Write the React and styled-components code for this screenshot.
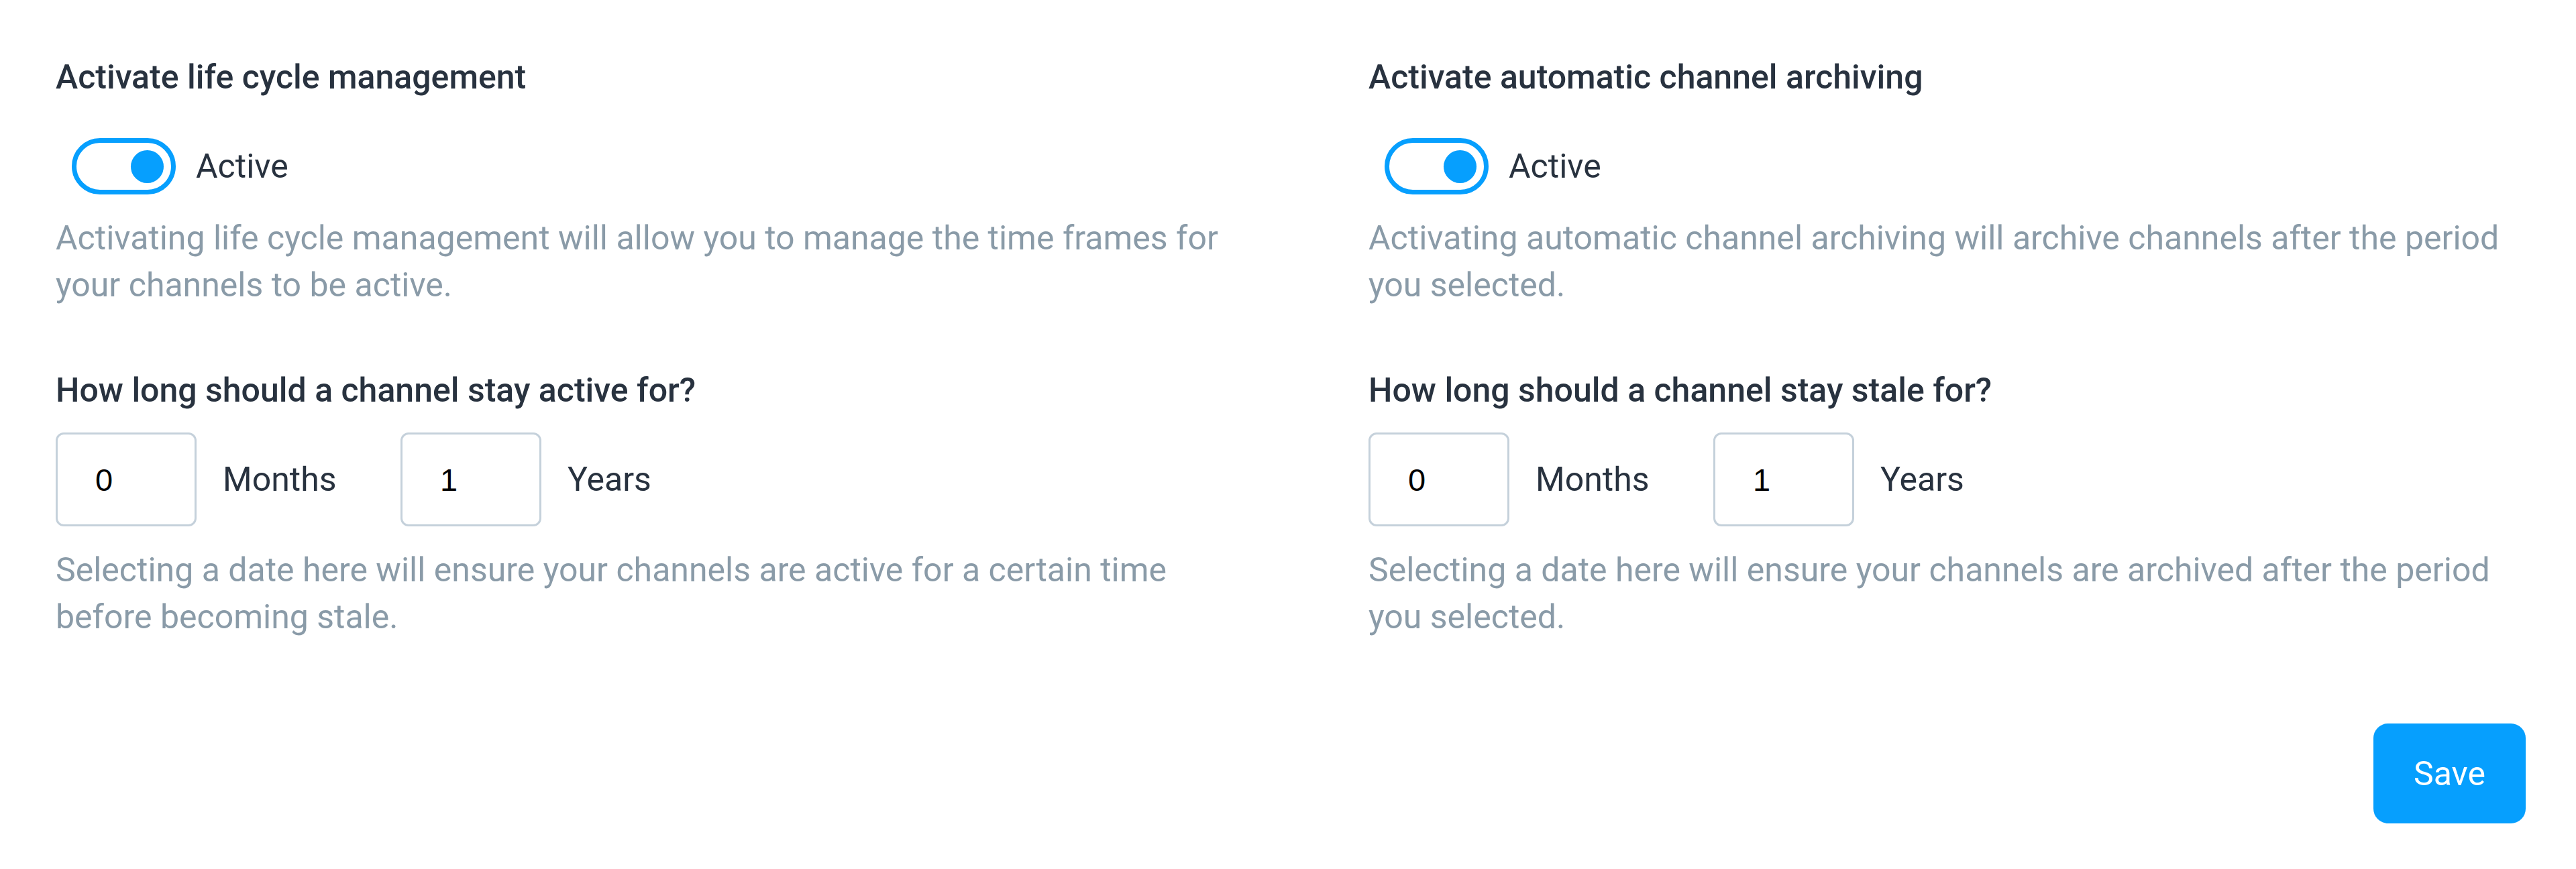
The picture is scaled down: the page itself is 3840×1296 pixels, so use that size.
import React, { useState } from 'react'
import styled, { createGlobalStyle } from 'styled-components'

const GlobalStyle = createGlobalStyle`
  body {
    margin: 0;
    background: #ffffff;
    font-family: Roboto, "Open Sans", Arial, sans-serif;
  }
`

const Page = styled.div`
  padding: 80px 75px 60px 83px;
`

const Columns = styled.div`
  display: grid;
  grid-template-columns: 1745px 1fr;
  column-gap: 212px;
`

const Section = styled.div`
  display: flex;
  flex-direction: column;
`

const Title = styled.div`
  font-size: 50px;
  line-height: 70px;
  font-weight: 500;
  color: #28323f;
  margin-top: ${(p) => (p.$first ? '0' : '87px')};
`

const ToggleRow = styled.div`
  display: flex;
  align-items: center;
  gap: 30px;
  margin-top: 56px;
  padding-left: 24px;
`

const Switch = styled.button`
  box-sizing: border-box;
  width: 155px;
  height: 84px;
  border: 7px solid #069ffe;
  border-radius: 42px;
  background: #ffffff;
  display: flex;
  align-items: center;
  justify-content: ${(p) => (p.$on ? 'flex-end' : 'flex-start')};
  padding: 0 11px;
  cursor: pointer;
`

const Knob = styled.span`
  width: 49px;
  height: 49px;
  border-radius: 50%;
  background: ${(p) => (p.$on ? '#069ffe' : '#c5d1db')};
`

const Label = styled.span`
  font-size: 50px;
  line-height: 70px;
  color: #28323f;
`

const Help = styled.p`
  margin: 30px 0 0;
  font-size: 50px;
  line-height: 70px;
  color: #8a9ba8;
`

const InputRow = styled.div`
  display: flex;
  align-items: center;
  gap: 40px;
  margin-top: 28px;
`

const Group = styled.div`
  display: flex;
  align-items: center;
  gap: 39px;
`

const NumberBox = styled.input`
  box-sizing: border-box;
  width: 210px;
  height: 140px;
  border: 3px solid #c5d1db;
  border-radius: 12px;
  padding: 0 0 0 56px;
  font-family: "Liberation Sans", Arial, sans-serif;
  font-size: 47px;
  color: #000000;
  outline: none;
`

const Unit = styled.span`
  min-width: 225px;
  font-size: 50px;
  line-height: 70px;
  color: #28323f;
`

const Footer = styled.div`
  display: flex;
  justify-content: flex-end;
  margin-top: 124px;
`

const SaveButton = styled.button`
  width: 227px;
  height: 149px;
  border: none;
  border-radius: 22px;
  background: #069ffe;
  color: #ffffff;
  font-family: Roboto, "Open Sans", Arial, sans-serif;
  font-size: 50px;
  cursor: pointer;
`

function Panel({ title, help, question, note }) {
  const [on, setOn] = useState(true)
  const [months, setMonths] = useState('0')
  const [years, setYears] = useState('1')
  return (
    <Section>
      <Title $first>{title}</Title>
      <ToggleRow>
        <Switch $on={on} onClick={() => setOn(!on)}>
          <Knob $on={on} />
        </Switch>
        <Label>{on ? 'Active' : 'Inactive'}</Label>
      </ToggleRow>
      <Help>{help}</Help>
      <Title>{question}</Title>
      <InputRow>
        <Group>
          <NumberBox value={months} onChange={(e) => setMonths(e.target.value)} />
          <Unit>Months</Unit>
        </Group>
        <Group>
          <NumberBox value={years} onChange={(e) => setYears(e.target.value)} />
          <Unit>Years</Unit>
        </Group>
      </InputRow>
      <Help>{note}</Help>
    </Section>
  )
}

export default function App() {
  return (
    <Page>
      <GlobalStyle />
      <Columns>
        <Panel
          title="Activate life cycle management"
          help="Activating life cycle management will allow you to manage the time frames for your channels to be active."
          question="How long should a channel stay active for?"
          note="Selecting a date here will ensure your channels are active for a certain time before becoming stale."
        />
        <Panel
          title="Activate automatic channel archiving"
          help="Activating automatic channel archiving will archive channels after the period you selected."
          question="How long should a channel stay stale for?"
          note="Selecting a date here will ensure your channels are archived after the period you selected."
        />
      </Columns>
      <Footer>
        <SaveButton>Save</SaveButton>
      </Footer>
    </Page>
  )
}
